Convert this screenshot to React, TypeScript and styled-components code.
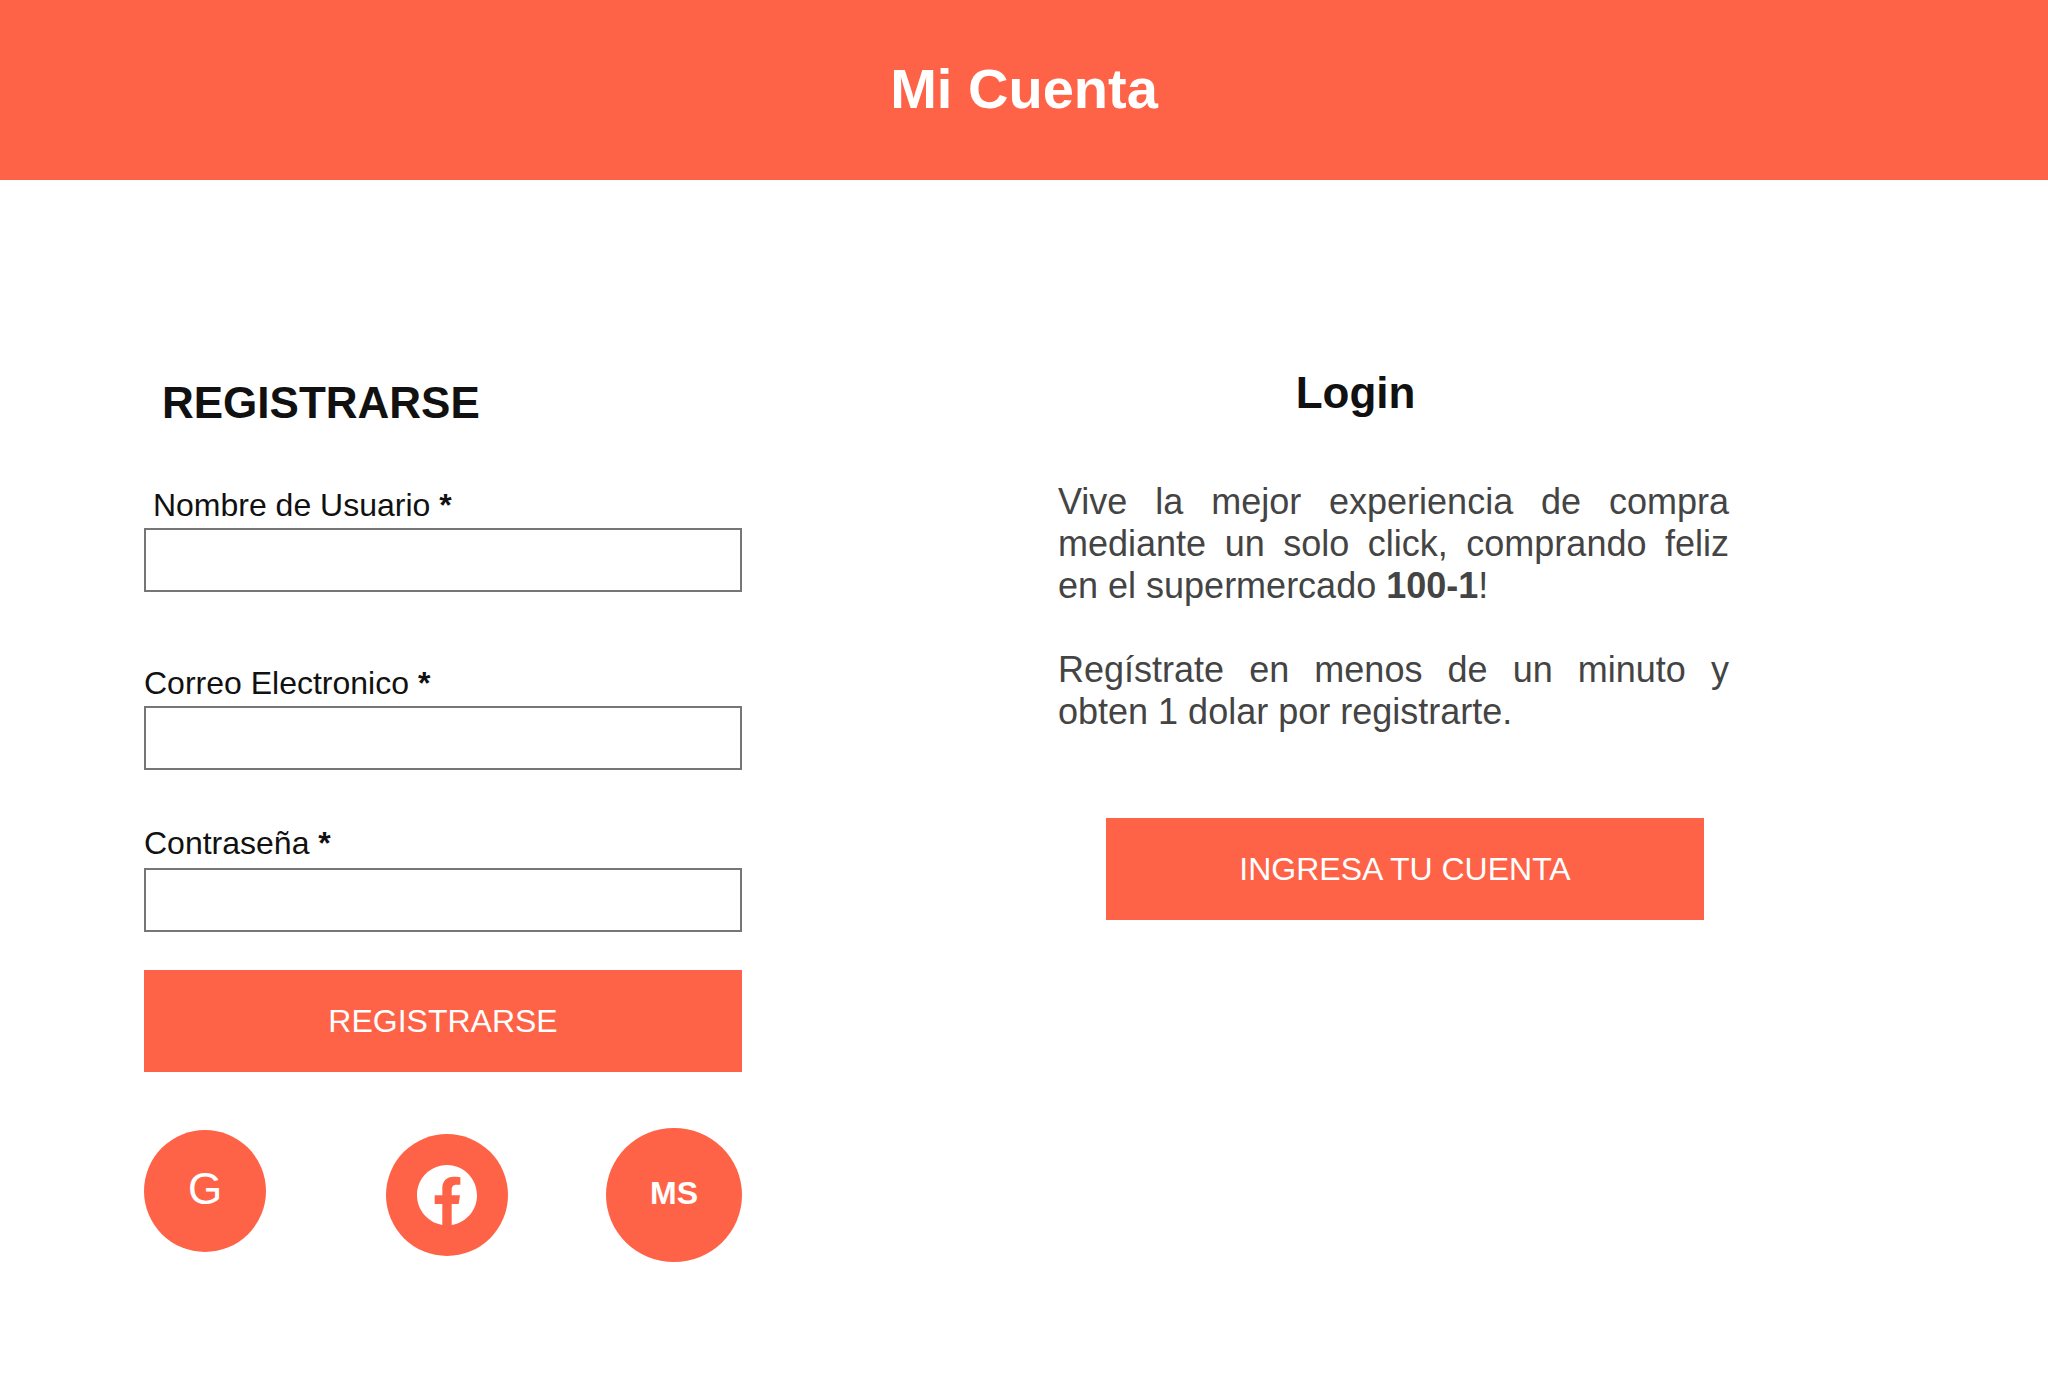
import React from "react";
import styled, { createGlobalStyle } from "styled-components";
import { BsFacebook } from "react-icons/bs";

const accent = "#ff6347";
const ink = "#111111";

const GlobalStyle = createGlobalStyle`
  *, *::before, *::after {
    box-sizing: border-box;
  }
  body {
    margin: 0;
    background: #ffffff;
    color: ${ink};
    font-family: "Liberation Sans", Arial, sans-serif;
  }
`;

const Header = styled.header`
  display: flex;
  align-items: center;
  justify-content: center;
  min-height: 180px;
  padding: 0 24px 2px;
  background: ${accent};
`;

const PageTitle = styled.h1`
  margin: 0;
  color: #ffffff;
  font-size: 56px;
  line-height: 64px;
`;

const Columns = styled.main`
  display: grid;
  grid-template-columns: 1fr 1fr;
`;

const RegisterForm = styled.form`
  display: flex;
  flex-direction: column;
  max-width: 742px;
  padding: 198px 0 112px 144px;
`;

const LoginPanel = styled.section`
  max-width: 705px;
  padding: 188px 0 112px 34px;
`;

const SectionTitle = styled.h2`
  margin: 0;
  font-size: 44px;
  line-height: 50px;
`;

const RegisterTitle = styled(SectionTitle)`
  padding-left: 18px;
`;

const LoginTitle = styled(SectionTitle)`
  padding-right: 76px;
  text-align: center;
`;

const Field = styled.div<{ $before: number; $gap?: number }>`
  display: flex;
  flex-direction: column;
  gap: ${(p) => p.$gap ?? 4}px;
  margin-top: ${(p) => p.$before}px;
`;

const Label = styled.label`
  font-size: 32px;
  line-height: 38px;
`;

const Input = styled.input`
  width: 100%;
  height: 64px;
  padding: 2px 10px;
  border: 2px solid #767676;
  border-radius: 0;
  background: #ffffff;
  color: ${ink};
  font: inherit;
  font-size: 32px;
`;

const Button = styled.button`
  width: 100%;
  height: 102px;
  padding: 0 16px;
  border: 0;
  background: ${accent};
  color: #ffffff;
  font: inherit;
  font-size: 32px;
  line-height: 38px;
  cursor: pointer;
`;

const SubmitButton = styled(Button)`
  margin-top: 38px;
`;

const LoginAction = styled.div`
  max-width: 646px;
  margin-top: 85px;
  padding-left: 48px;
`;

const Intro = styled.div`
  margin-top: 63px;
  color: #444444;
  font-size: 36px;
  line-height: 42px;
  text-align: justify;
`;

const Paragraph = styled.p`
  margin: 0;

  & + & {
    margin-top: 42px;
  }
`;

const SocialRow = styled.div`
  display: grid;
  grid-template-columns: 242px 1fr auto;
  align-items: baseline;
  margin-top: 56px;
`;

const SocialButton = styled.button`
  display: flex;
  align-items: center;
  justify-content: center;
  width: 122px;
  height: 122px;
  padding: 0 0 4px;
  border: 0;
  border-radius: 50%;
  background: ${accent};
  color: #ffffff;
  font: inherit;
  font-size: 44px;
  line-height: 50px;
  cursor: pointer;
`;

const IconButton = styled(SocialButton)`
  align-self: center;
  padding: 0;
`;

const LargeSocialButton = styled(SocialButton)`
  width: 136px;
  height: 134px;
  font-size: 32px;
  font-weight: 700;
  line-height: 38px;
`;

export default function App() {
  return (
    <>
      <GlobalStyle />
      <Header>
        <PageTitle>Mi Cuenta</PageTitle>
      </Header>
      <Columns>
        <RegisterForm onSubmit={(e) => e.preventDefault()}>
          <RegisterTitle>REGISTRARSE</RegisterTitle>
          <Field $before={58}>
            <Label htmlFor="usuario">
              {"\u00a0"}Nombre de Usuario <strong>*</strong>
            </Label>
            <Input id="usuario" type="text" />
          </Field>
          <Field $before={72}>
            <Label htmlFor="correo">
              Correo Electronico <strong>*</strong>
            </Label>
            <Input id="correo" type="email" />
          </Field>
          <Field $before={54} $gap={6}>
            <Label htmlFor="clave">
              Contraseña <strong>*</strong>
            </Label>
            <Input id="clave" type="password" />
          </Field>
          <SubmitButton type="submit">REGISTRARSE</SubmitButton>
          <SocialRow>
            <SocialButton type="button">G</SocialButton>
            <IconButton type="button" aria-label="Facebook">
              <BsFacebook size={60} />
            </IconButton>
            <LargeSocialButton type="button">MS</LargeSocialButton>
          </SocialRow>
        </RegisterForm>
        <LoginPanel>
          <LoginTitle>Login</LoginTitle>
          <Intro>
            <Paragraph>
              Vive la mejor experiencia de compra mediante un solo click,
              comprando feliz en el supermercado <strong>100-1</strong>!
            </Paragraph>
            <Paragraph>
              Regístrate en menos de un minuto y obten 1 dolar por registrarte.
            </Paragraph>
          </Intro>
          <LoginAction>
            <Button type="button">INGRESA TU CUENTA</Button>
          </LoginAction>
        </LoginPanel>
      </Columns>
    </>
  );
}
